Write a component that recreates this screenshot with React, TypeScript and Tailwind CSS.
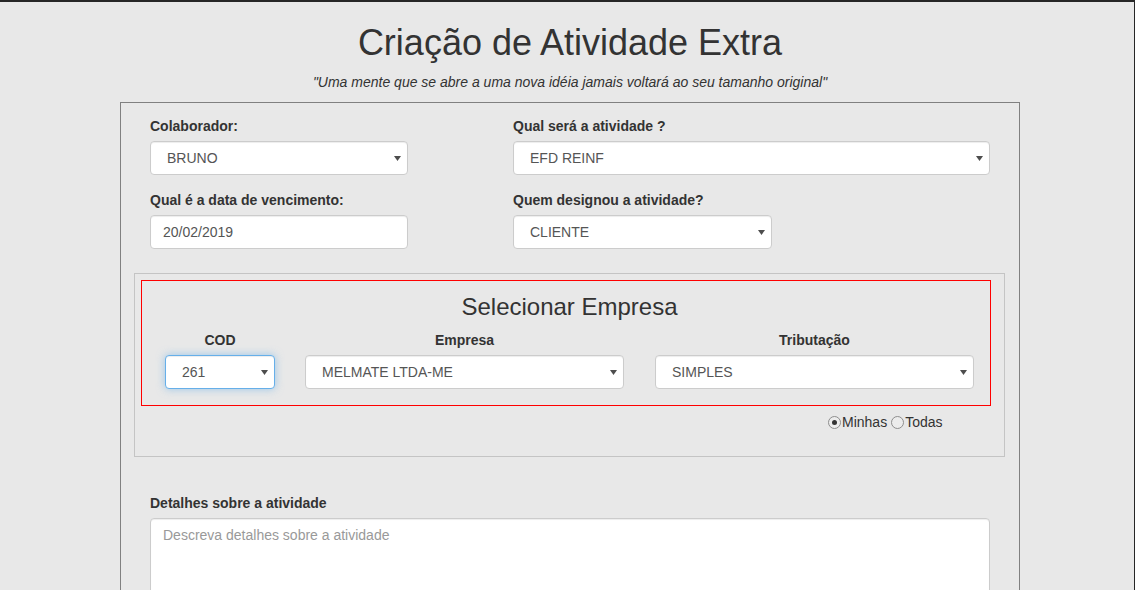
import React from 'react';

function Arrow() {
  return (
    <svg width="7" height="5" viewBox="0 0 7 5" className="shrink-0">
      <polygon points="0,0 7,0 3.5,5" fill="#4d4d4d" />
    </svg>
  );
}

function Select({ value, width, focused }: { value: string; width: string; focused?: boolean }) {
  return (
    <div
      className={`${width} flex h-[34px] items-center justify-between rounded-[4px] border bg-white pl-[16px] pr-[6px] text-[14px] leading-5 text-[#555] ${
        focused
          ? 'border-[#66afe9] shadow-[0_0_8px_rgba(102,175,233,0.6),inset_0_1px_1px_rgba(0,0,0,0.075)]'
          : 'border-[#ccc] shadow-[inset_0_1px_1px_rgba(0,0,0,0.075)]'
      }`}
    >
      <span>{value}</span>
      <Arrow />
    </div>
  );
}

function Label({ children, center }: { children: React.ReactNode; center?: boolean }) {
  return (
    <div className={`mb-[5px] text-[14px] font-bold leading-5 text-[#333] ${center ? 'text-center' : ''}`}>
      {children}
    </div>
  );
}

function Radio({ checked, label }: { checked?: boolean; label: string }) {
  return (
    <div className="flex items-center">
      <span className="flex h-[13px] w-[13px] items-center justify-center rounded-full border border-[#8e8e8e] bg-[#ececec]">
        {checked && <span className="h-[5px] w-[5px] rounded-full bg-[#333]" />}
      </span>
      <span className="ml-[1px] text-[14px] leading-5 text-[#333]">{label}</span>
    </div>
  );
}

export default function App() {
  return (
    <div className="min-h-screen border-r border-t-2 border-[#262626] bg-[#e8e8e8] pb-10 font-['Liberation_Sans',Arial,sans-serif] text-[#333]">
      <div className="ml-[120px] w-[900px]">
        <h1 className="mt-[21px] text-center text-[36px] leading-[40px] text-[#333]">Criação de Atividade Extra</h1>
        <p className="mt-[9px] text-center text-[14px] italic leading-5 text-[#333]">
          "Uma mente que se abre a uma nova idéia jamais voltará ao seu tamanho original"
        </p>

        <div className="mt-[10px] border border-[#808080] px-[29px] pt-[13px]">
          <div className="flex">
            <div className="w-[258px]">
              <Label>Colaborador:</Label>
              <Select value="BRUNO" width="w-[258px]" />
            </div>
            <div className="ml-[105px] w-[477px]">
              <Label>Qual será a atividade ?</Label>
              <Select value="EFD REINF" width="w-[477px]" />
            </div>
          </div>

          <div className="mt-[15px] flex">
            <div className="w-[258px]">
              <Label>Qual é a data de vencimento:</Label>
              <div className="flex h-[34px] items-center rounded-[4px] border border-[#ccc] bg-white pl-[12px] text-[14px] leading-5 text-[#555] shadow-[inset_0_1px_1px_rgba(0,0,0,0.075)]">
                20/02/2019
              </div>
            </div>
            <div className="ml-[105px] w-[477px]">
              <Label>Quem designou a atividade?</Label>
              <Select value="CLIENTE" width="w-[259px]" />
            </div>
          </div>

          <div className="-ml-[16px] -mr-[15px] mt-[24px] border border-[#c4c4c4] pb-[24px] pl-[6px] pr-[13px] pt-[6px]">
            <div className="border border-[#ff0000] pb-[16px] pl-[23px] pt-[13px]">
              <div className="pr-[16px] text-center text-[24px] leading-[26px] text-[#333]">Selecionar Empresa</div>
              <div className="mt-[10px] flex">
                <div className="w-[110px]">
                  <Label center>COD</Label>
                  <Select value="261" width="w-[110px]" focused />
                </div>
                <div className="ml-[30px] w-[319px]">
                  <Label center>Empresa</Label>
                  <Select value="MELMATE LTDA-ME" width="w-[319px]" />
                </div>
                <div className="ml-[31px] w-[319px]">
                  <Label center>Tributação</Label>
                  <Select value="SIMPLES" width="w-[319px]" />
                </div>
              </div>
            </div>
            <div className="ml-[687px] mt-[6px] flex gap-[4px]">
              <Radio checked label="Minhas" />
              <Radio label="Todas" />
            </div>
          </div>

          <div className="mt-[36px]">
            <Label>Detalhes sobre a atividade</Label>
            <div className="h-[150px] rounded-[4px] border border-[#ccc] bg-white px-[12px] py-[6px] text-[14px] leading-5 text-[#999] shadow-[inset_0_1px_1px_rgba(0,0,0,0.075)]">
              Descreva detalhes sobre a atividade
            </div>
          </div>
          <div className="h-[20px]" />
        </div>
      </div>
    </div>
  );
}
